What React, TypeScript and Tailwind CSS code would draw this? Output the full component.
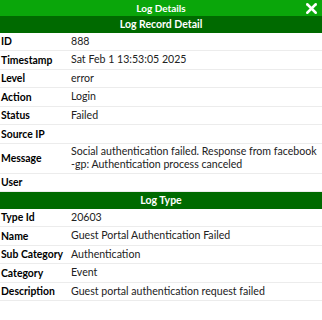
import { X } from "lucide-react";
import type { ReactNode } from "react";

type Row = { label: string; value: ReactNode };

const RECORD: Row[] = [
  { label: "ID", value: "888" },
  { label: "Timestamp", value: "Sat Feb 1 13:53:05 2025" },
  { label: "Level", value: "error" },
  { label: "Action", value: "Login" },
  { label: "Status", value: "Failed" },
  { label: "Source IP", value: "" },
  {
    label: "Message",
    value: (
      <>
        Social authentication failed. Response from facebook
        <br />
        -gp: Authentication process canceled
      </>
    ),
  },
  { label: "User", value: "" },
];

const LOG_TYPE: Row[] = [
  { label: "Type Id", value: "20603" },
  { label: "Name", value: "Guest Portal Authentication Failed" },
  { label: "Sub Category", value: "Authentication" },
  { label: "Category", value: "Event" },
  { label: "Description", value: "Guest portal authentication request failed" },
];

function Section({ title }: { title: string }) {
  return (
    <div className="h-[16.5px] bg-[#006a00] text-white font-bold text-[10.5px] leading-[16.5px] text-center">
      {title}
    </div>
  );
}

function Rows({ rows }: { rows: Row[] }) {
  return (
    <div>
      {rows.map((r) => (
        <div key={r.label} className="flex items-center min-h-[18.5px] border-b border-[#ececec] py-[1.5px]">
          <div className="w-[71px] shrink-0 pl-[1px] font-bold text-[10.4px] leading-[14px] text-black">{r.label}</div>
          <div className="flex-1 whitespace-nowrap text-[10.6px] leading-[13px] text-[#222]">{r.value}</div>
        </div>
      ))}
    </div>
  );
}

export default function App() {
  return (
    <div className="w-[322px] h-[320px] bg-white font-['Lato',sans-serif] overflow-hidden">
      <div className="relative h-[16px] bg-[#0aa60a] text-white font-bold text-[10px] leading-[16px] text-center">
        Log Details
        <button className="absolute right-[2px] top-0 text-white">
          <X size={17} strokeWidth={3.5} />
        </button>
      </div>
      <Section title="Log Record Detail" />
      <Rows rows={RECORD} />
      <Section title="Log Type" />
      <Rows rows={LOG_TYPE} />
    </div>
  );
}
